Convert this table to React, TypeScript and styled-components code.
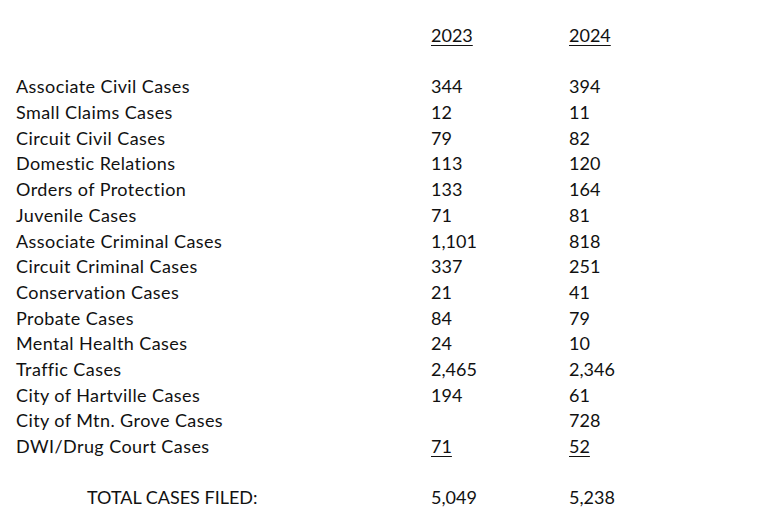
import React from "react";
import styled, { createGlobalStyle } from "styled-components";

const Global = createGlobalStyle`
  html, body { margin: 0; padding: 0; background: #ffffff; }
  body { font-family: "Lato", "Open Sans", sans-serif; color: #111; }
`;

const Sheet = styled.div`
  width: 765px;
  height: 532px;
  box-sizing: border-box;
  padding: 23px 0 0 16px;
  display: grid;
  grid-template-columns: 415px 138px 1fr;
  grid-auto-rows: 25.7px;
  font-size: 18px;
  line-height: 25.7px;
  overflow: hidden;
`;

const Cell = styled.div<{ $u?: boolean }>`
  white-space: nowrap;
  text-decoration: ${(p) => (p.$u ? "underline" : "none")};
  text-underline-offset: 3px;
  text-decoration-thickness: 1.3px;
`;

const Label = styled.div<{ $total?: boolean }>`
  white-space: nowrap;
  letter-spacing: ${(p) => (p.$total ? "0" : "0.42px")};
  padding-left: ${(p) => (p.$total ? "71px" : "0")};
`;

const Spacer = styled.div`
  grid-column: 1 / -1;
`;

const rows: [string, string, string][] = [
  ["Associate Civil Cases", "344", "394"],
  ["Small Claims Cases", "12", "11"],
  ["Circuit Civil Cases", "79", "82"],
  ["Domestic Relations", "113", "120"],
  ["Orders of Protection", "133", "164"],
  ["Juvenile Cases", "71", "81"],
  ["Associate Criminal Cases", "1,101", "818"],
  ["Circuit Criminal Cases", "337", "251"],
  ["Conservation Cases", "21", "41"],
  ["Probate Cases", "84", "79"],
  ["Mental Health Cases", "24", "10"],
  ["Traffic Cases", "2,465", "2,346"],
  ["City of Hartville Cases", "194", "61"],
  ["City of Mtn. Grove Cases", "", "728"],
  ["DWI/Drug Court Cases", "71", "52"],
];

export default function App() {
  return (
    <>
      <Global />
      <Sheet>
        <Label />
        <Cell $u>2023</Cell>
        <Cell $u>2024</Cell>
        <Spacer />
        {rows.map(([label, a, b], i) => {
          const last = i === rows.length - 1;
          return (
            <React.Fragment key={label}>
              <Label>{label}</Label>
              <Cell $u={last}>{a}</Cell>
              <Cell $u={last}>{b}</Cell>
            </React.Fragment>
          );
        })}
        <Spacer />
        <Label $total>TOTAL CASES FILED:</Label>
        <Cell>5,049</Cell>
        <Cell>5,238</Cell>
      </Sheet>
    </>
  );
}
